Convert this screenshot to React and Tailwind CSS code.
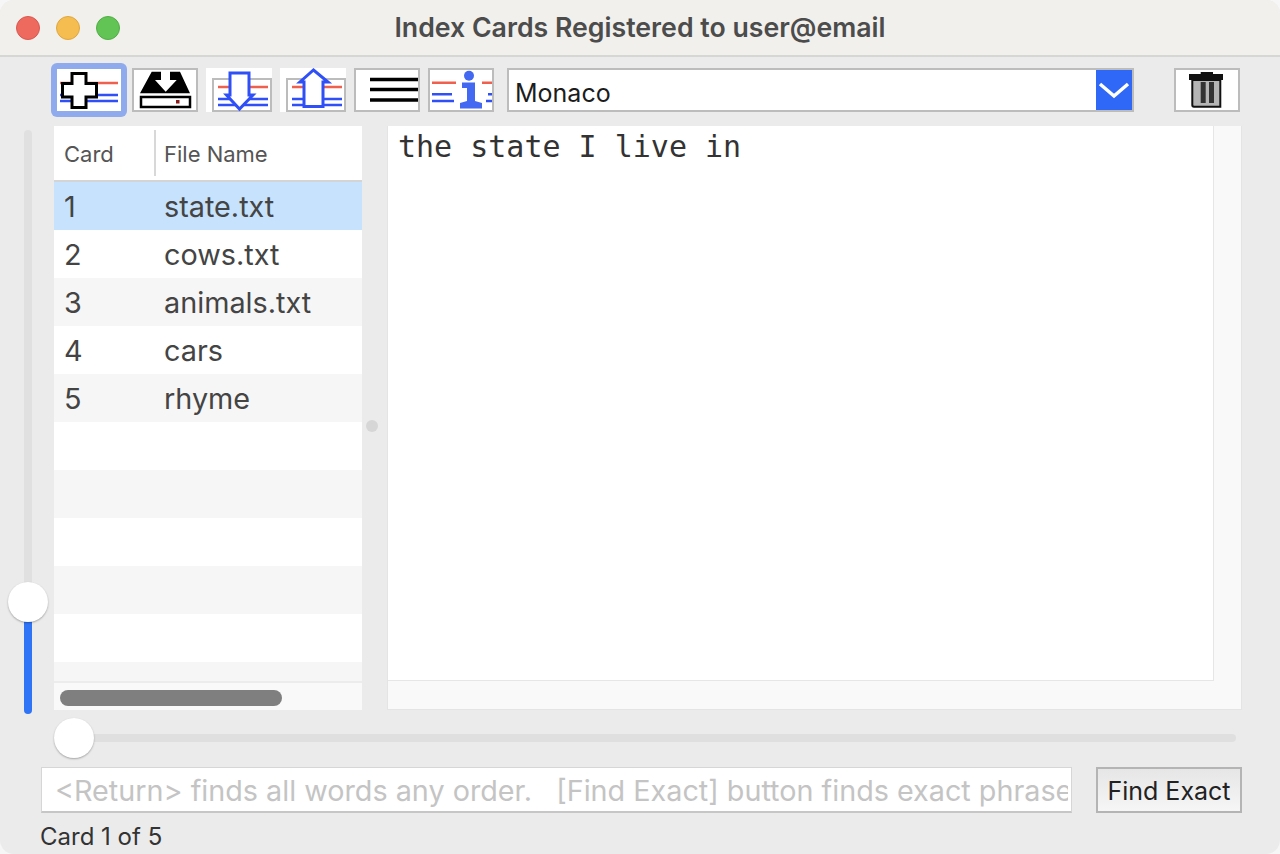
import React from 'react';

const RED = '#f0604f';
const BLUE = '#2f50f6';

// Red and blue ruled lines shared by the card icons
function CardLines({ x1 = 6, x2 = 60, y = 8 }) {
  return (
    <g strokeWidth="2.5" fill="none">
      <path d={`M${x1} ${y}H${x2}`} stroke={RED} />
      <path d={`M${x1} ${y + 12}H${x2}`} stroke={BLUE} />
      <path d={`M${x1} ${y + 18}H${x2}`} stroke={BLUE} />
    </g>
  );
}

function IconButton({ children, focused, tall }) {
  if (tall) {
    return (
      <div className="w-[66px] h-[44px] bg-white relative shrink-0">
        <div className="absolute left-[6px] right-0 top-[10px] bottom-0 border-2 border-[#bcbcbc]" />
        <svg width="66" height="44" viewBox="0 0 66 44" className="absolute inset-0">{children}</svg>
      </div>
    );
  }
  return (
    <div className={focused ? 'rounded-[6px] bg-[#8fabee] p-[6px] shrink-0 ml-[-4px] mr-[-3px] mt-[-5px]' : 'shrink-0'}>
      <div className={focused ? 'w-[64px] h-[42px] bg-white' : 'w-[66px] h-[44px] bg-white border-2 border-[#bcbcbc]'}>
        <svg width={focused ? 64 : 62} height={focused ? 42 : 40} viewBox={focused ? '0 0 64 42' : '0 0 62 40'} className="block">{children}</svg>
      </div>
    </div>
  );
}

function SliderThumb({ className }) {
  return <div className={`absolute w-[40px] h-[40px] rounded-full bg-white shadow-[0_1px_2px_rgba(0,0,0,0.3)] ${className}`} />;
}

const rows = [
  ['1', 'state.txt'],
  ['2', 'cows.txt'],
  ['3', 'animals.txt'],
  ['4', 'cars'],
  ['5', 'rhyme'],
  ['', ''],
  ['', ''],
  ['', ''],
  ['', ''],
  ['', ''],
];

export default function App() {
  return (
    <div className="w-[1280px] h-[854px] bg-[#f6f6f6] overflow-hidden">
      <div className="w-full h-full rounded-[14px] bg-[#ebebeb] overflow-hidden flex flex-col font-['Inter','Liberation_Sans',sans-serif] text-[#3a3a3a]">
        {/* Barra de título */}
        <div className="h-[57px] shrink-0 bg-[#f1f0ed] border-b-2 border-[#d6d6d4] relative flex items-center justify-center">
          <div className="absolute left-[16px] top-[16px] flex gap-[16px]">
            <div className="w-[24px] h-[24px] rounded-full bg-[#ee6a5f] border border-[#d9584e]" />
            <div className="w-[24px] h-[24px] rounded-full bg-[#f5bd4f] border border-[#dea73f]" />
            <div className="w-[24px] h-[24px] rounded-full bg-[#61c454] border border-[#52ad46]" />
          </div>
          <span className="text-[26.700px] font-semibold text-[#4c4c4c]">Index Cards Registered to user@email</span>
        </div>

        {/* Barra de herramientas */}
        <div className="h-[69px] shrink-0 flex items-start pt-[11px] pl-[55px]">
          <div className="flex gap-[8px] items-start">
            <IconButton focused>
              <CardLines x1={3} x2={61} y={14} />
              <path d="M15 4.500h14v10h10.500v13.500H29v10.500H15V28H5.500V14.500H15z" fill="#fff" stroke="#000" strokeWidth="3" />
            </IconButton>
            <IconButton>
              <path d="M6 23.300 17.700 1.700H27V10H21L31.700 21.700 42.700 10H36V1.700H46L56 23.300Z" fill="#000" />
              <rect x="7" y="27" width="49" height="10" fill="#fff" stroke="#000" strokeWidth="2.500" />
              <rect x="42" y="30" width="3.500" height="3.500" fill="#8b1a1a" />
            </IconButton>
            <IconButton tall>
              <CardLines x1={12} x2={62} y={19} />
              <path d="M24 5h19v22h4L33.500 41 20.500 27H24z" fill="#fff" stroke={BLUE} strokeWidth="3" />
            </IconButton>
            <IconButton tall>
              <CardLines x1={12} x2={62} y={19} />
              <path d="M24 38.500h19V14h5L33.500 2 20 14h4z" fill="#fff" stroke={BLUE} strokeWidth="3" />
            </IconButton>
            <IconButton>
              <path d="M14 9.500H62M14 19.500H62M14 30H62" stroke="#000" strokeWidth="3.500" />
            </IconButton>
            <IconButton>
              <path d="M2 12.700H26M52 12.700H62" stroke={RED} strokeWidth="2.500" />
              <path d="M2 24.300H22M2 31H24M58 24.300H62M56 31H62" stroke={BLUE} strokeWidth="2.500" />
              <circle cx="39" cy="5.700" r="5" fill="#4368f2" />
              <path d="M32 12.500H45V31L52 33V38.500H30V33L37 31V18H32Z" fill="#4368f2" />
            </IconButton>
          </div>
          <div className="ml-[13px] w-[627px] h-[44px] flex border-2 border-[#bcbcbc] bg-white">
            <div className="flex-1 flex items-center pl-[6px] pt-[7px] text-[25px] text-[#1c1c1c]">Monaco</div>
            <div className="w-[36px] bg-[#2f67f6] flex items-center justify-center">
              <svg width="32" height="18" viewBox="0 0 32 18">
                <path d="M2 3 L16 15 L30 3" fill="none" stroke="#fff" strokeWidth="3.500" />
              </svg>
            </div>
          </div>
          <div className="ml-[40px] w-[66px] h-[44px] bg-white border-2 border-[#bcbcbc] flex items-center justify-center">
            <svg width="36" height="38" viewBox="0 0 36 38">
              <path d="M11.700 1H24V3H34V9H0V3H11.700Z" fill="#111" />
              <path d="M3.300 9H31.300V35.700H5Q3.300 35.700 3.300 34Z" fill="#b5b5b5" stroke="#111" strokeWidth="2" />
              <path d="M14.200 11V32M22.500 11V32" stroke="#333" strokeWidth="5" />
            </svg>
          </div>
        </div>

        {/* Contenido principal */}
        <div className="h-[584px] shrink-0 flex">
          {/* Deslizador vertical */}
          <div className="w-[54px] shrink-0 relative">
            <div className="absolute left-[24px] top-[4px] w-[8px] h-[584px] rounded-full bg-[#e0e0e0] overflow-hidden flex flex-col justify-end">
              <div className="h-[110px] bg-[#2f74f6]" />
            </div>
            <SliderThumb className="left-[8px] top-[456px]" />
          </div>

          {/* Tabla de tarjetas */}
          <div className="w-[308px] shrink-0 bg-[#f9f9f9] flex flex-col overflow-hidden">
            <div className="h-[56px] shrink-0 bg-white border-b-2 border-[#d4d4d4] flex items-center text-[22px] text-[#555]">
              <div className="w-[102px] h-[46px] pl-[10px] pt-[2px] border-r-2 border-[#d8d8d8] flex items-center">Card</div>
              <div className="pl-[8px] pt-[2px]">File Name</div>
            </div>
            <div className="h-[501px] overflow-hidden shrink-0 border-b-2 border-[#ececec]">
              {rows.map(([card, name], i) => (
                <div
                  key={i}
                  className={`h-[48px] pt-[2px] flex items-center text-[28.800px] text-[#444] ${i === 0 ? 'bg-[#c7e2fc]' : i % 2 === 1 ? 'bg-white' : 'bg-[#f6f6f6]'}`}
                >
                  <div className="w-[102px] pl-[10px]">{card}</div>
                  <div className="pl-[8px]">{name}</div>
                </div>
              ))}
              <div className="h-[48px] bg-[#f6f6f6]" />
            </div>
            <div className="flex-1 pl-[6px] pt-[7px]">
              <div className="w-[222px] h-[16px] rounded-full bg-[#7f7f7f]" />
            </div>
          </div>

          {/* Separador */}
          <div className="w-[25px] shrink-0 flex items-center pl-[4px]">
            <div className="w-[12px] h-[12px] rounded-full bg-[#d6d6d6] mt-[16px]" />
          </div>

          {/* Panel de texto */}
          <div className="w-[855px] shrink-0 bg-[#f9f9f9] border-l border-b border-r border-[#e4e4e4] flex flex-col">
            <div className="w-[826px] h-[555px] shrink-0 bg-white border-r border-b border-[#e6e6e6] pl-[10px] pt-[1px] text-[30px] leading-[40px] text-[#333] font-['DejaVu_Sans_Mono',monospace]">
              the state I live in
            </div>
          </div>
        </div>

        {/* Deslizador horizontal */}
        <div className="h-[57px] shrink-0 relative">
          <div className="absolute left-[54px] top-[24px] w-[1182px] h-[8px] rounded-full bg-[#dfdfdf]" />
          <SliderThumb className="left-[54px] top-[8px]" />
        </div>

        {/* Búsqueda */}
        <div className="h-[46px] shrink-0 flex pl-[41px]">
          <div className="w-[1031px] h-[46px] bg-white border border-[#d6d6d6] border-b-2 border-b-[#c6c6c6] pl-[13px] pr-[3px] pt-[3px] flex items-center">
            <div className="flex-1 overflow-hidden whitespace-pre text-[28.750px] text-[#c4c4c4]">
              {'<Return> finds all words any order.   [Find Exact] button finds exact phrase'}
            </div>
          </div>
          <div className="ml-[24px] w-[146px] h-[46px] pt-[3px] border-2 border-[#b4b4b4] bg-gradient-to-b from-[#e6e6e6] to-[#f6f6f6] flex items-center justify-center text-[25px] text-[#222]">
            Find Exact
          </div>
        </div>

        {/* Estado */}
        <div className="pl-[40px] pt-[9px] text-[24px] leading-[30px] text-[#333]">Card 1 of 5</div>
      </div>
    </div>
  );
}
